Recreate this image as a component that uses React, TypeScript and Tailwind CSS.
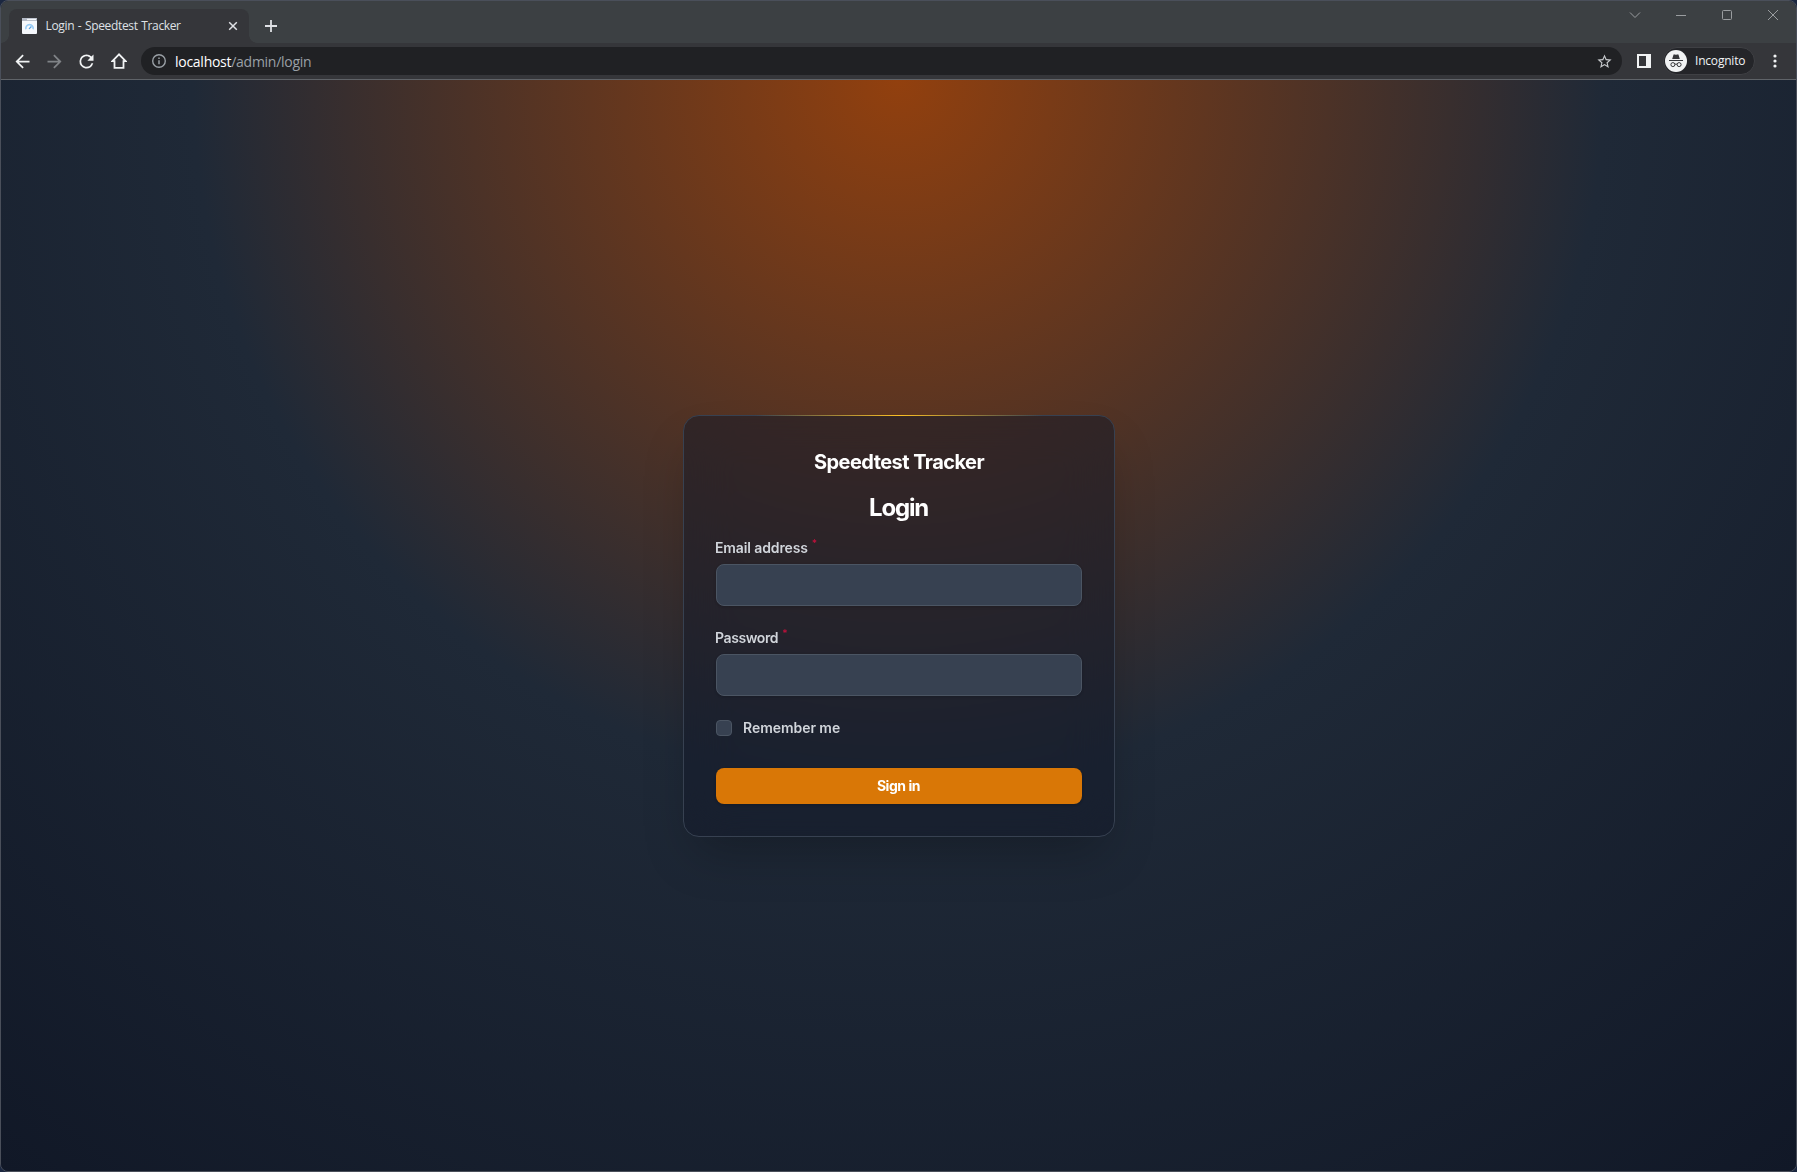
import React from "react";

function Favicon() {
  return (
    <svg width="15" height="16" viewBox="0 0 15 16" className="shrink-0">
      <rect x="0" y="0" width="15" height="16" rx="1" fill="#f5f8fc" />
      <path d="M0 1a1 1 0 0 1 1-1h13a1 1 0 0 1 1 1v2H0z" fill="#b4bac6" />
      <rect x="5" y=".8" width="9" height="1.3" fill="#f5f8fc" />
      <path d="M3.9 11.2a3.7 3.7 0 1 1 7.2 0" fill="none" stroke="#9bcdf5" strokeWidth="1.6" />
      <path d="M7 10.9l2.4-2.4" stroke="#5aa5e6" strokeWidth="1.3" />
    </svg>
  );
}

function BackArrow({ className }: { className: string }) {
  return (
    <svg width="21" height="21" viewBox="0 0 24 24" fill="currentColor" className={className}>
      <path d="M20 11H7.83l5.59-5.59L12 4l-8 8 8 8 1.41-1.41L7.83 13H20v-2z" />
    </svg>
  );
}

function NavButton({ children }: { children: React.ReactNode }) {
  return <div className="flex h-8 w-8 items-center justify-center text-[#f1f3f4]">{children}</div>;
}

function TabStrip() {
  return (
    <div className="flex h-[42px] shrink-0 bg-[#3c4043] pl-2">
      <div className="relative mt-2 flex h-[34px] w-[240px] items-center rounded-t-lg bg-[#35363a] pl-[12.5px]">
        <div className="absolute bottom-0 -left-2 h-2 w-2 bg-[radial-gradient(circle_at_top_left,transparent_7.5px,#35363a_8px)]" />
        <div className="absolute bottom-0 -right-2 h-2 w-2 bg-[radial-gradient(circle_at_top_right,transparent_7.5px,#35363a_8px)]" />
        <Favicon />
        <span className="ml-[9px] w-[175.5px] whitespace-nowrap font-['Open_Sans',sans-serif] text-[12px] leading-4 tracking-[-0.35px] [word-spacing:0.9px] text-[#dfe1e5]">
          Login - Speedtest Tracker
        </span>
        <svg width="16" height="16" viewBox="0 0 16 16" stroke="#dfe1e5" strokeWidth="1.5" className="ml-1">
          <path d="M4.2 4.2l7.6 7.6M11.8 4.2l-7.6 7.6" />
        </svg>
      </div>
      <svg width="16" height="16" viewBox="0 0 16 16" stroke="#dfe1e5" strokeWidth="1.8" className="mt-[17px] ml-[14px]">
        <path d="M8 2v12M2 8h12" />
      </svg>
      <div className="ml-auto flex h-7 text-[#9a9da0]">
        <div className="flex w-[46px] items-center justify-center">
          <svg width="12" height="12" viewBox="0 0 12 12" fill="none" stroke="currentColor"><path d="M1 3.5l5 5 5-5" /></svg>
        </div>
        <div className="flex w-[46px] items-center justify-center">
          <svg width="10" height="12" viewBox="0 0 10 12" fill="none" stroke="currentColor"><path d="M0 6.5h10" /></svg>
        </div>
        <div className="flex w-[46px] items-center justify-center">
          <svg width="10" height="10" viewBox="0 0 10 10" fill="none" stroke="currentColor"><rect x=".5" y=".5" width="9" height="9" rx="1" /></svg>
        </div>
        <div className="flex w-[46px] items-center justify-center">
          <svg width="10" height="10" viewBox="0 0 10 10" fill="none" stroke="currentColor"><path d="M0 0l10 10M10 0L0 10" /></svg>
        </div>
      </div>
    </div>
  );
}

function IncognitoGlyph() {
  return (
    <svg width="22" height="22" viewBox="0 0 22 22" className="shrink-0">
      <circle cx="11" cy="11" r="11" fill="#f1f3f4" />
      <path d="M7.2 9L8.4 4.9q.2-.7 1-.5l1.6.4 1.6-.4q.8-.2 1 .5L14.8 9z" fill="#35363a" />
      <rect x="4" y="10" width="14" height="1" fill="#35363a" />
      <g fill="none" stroke="#35363a" strokeWidth="1">
        <circle cx="7.9" cy="14.6" r="2" />
        <circle cx="14.1" cy="14.6" r="2" />
        <path d="M9.9 14.3q1.1-.6 2.2 0" />
      </g>
    </svg>
  );
}

function Toolbar() {
  return (
    <div className="flex h-[37px] shrink-0 items-center border-b border-[#5f6368] bg-[#35363a] pl-[5.5px] font-['Open_Sans',sans-serif]">
      <NavButton><BackArrow className="" /></NavButton>
      <NavButton><BackArrow className="rotate-180 text-[#808387]" /></NavButton>
      <NavButton>
        <svg width="21" height="21" viewBox="0 0 24 24" fill="currentColor">
          <path d="M17.65 6.35A7.96 7.96 0 0 0 12 4a8 8 0 1 0 7.73 10h-2.08A5.99 5.99 0 0 1 12 18c-3.31 0-6-2.69-6-6s2.69-6 6-6c1.66 0 3.14.69 4.22 1.78L13 11h7V4l-2.35 2.35z" />
        </svg>
      </NavButton>
      <NavButton>
        <svg width="16" height="16" viewBox="0 0 16 16" fill="none" stroke="currentColor" strokeWidth="1.8" className="ml-px">
          <path d="M8 1.3L1.4 8.1h2.1v6.8h9V8.1h2.1z" />
        </svg>
      </NavButton>
      <div className="ml-[6.5px] flex h-7 w-[1481px] items-center rounded-full bg-[#202124] pr-[9.5px] pl-[10px]">
        <svg width="16" height="16" viewBox="0 0 16 16" fill="none" stroke="#9aa0a6" strokeWidth="1.4">
          <circle cx="8" cy="8" r="6.3" />
          <path d="M8 7.2v4M8 4.4v1.5" strokeWidth="1.5" />
        </svg>
        <span className="ml-[8px] whitespace-nowrap pt-px text-[14px] leading-5 tracking-[-0.27px] text-[#9aa0a6]">
          <span className="text-white">localhost</span>/admin/login
        </span>
        <svg width="17" height="17" viewBox="0 0 24 24" fill="#c4c7ca" className="ml-auto">
          <path d="M22 9.24l-7.19-.62L12 2 9.19 8.63 2 9.24l5.46 4.73L5.82 21 12 17.27 18.18 21l-1.63-7.03L22 9.24zM12 15.4l-3.76 2.27 1-4.28-3.32-2.88 4.38-.38L12 6.1l1.71 4.04 4.38.38-3.32 2.88 1 4.28L12 15.4z" />
        </svg>
      </div>
      <svg width="14" height="14" viewBox="0 0 14 14" className="ml-[15px]">
        <path fillRule="evenodd" d="M0 0h14v14H0zM2 2v10h7V2z" fill="#f1f3f4" />
      </svg>
      <div className="ml-3 flex h-7 w-[92px] items-center rounded-full border border-[#3f4044] bg-[#242529] pl-[1px]">
        <IncognitoGlyph />
        <span className="ml-[8px] whitespace-nowrap text-[12px] leading-4 tracking-[-0.2px] text-[#f1f3f4]">Incognito</span>
      </div>
      <svg width="4" height="14" viewBox="0 0 4 14" fill="#f1f3f4" className="ml-[17.5px]">
        <circle cx="2" cy="2" r="1.6" />
        <circle cx="2" cy="7" r="1.6" />
        <circle cx="2" cy="12" r="1.6" />
      </svg>
    </div>
  );
}

function Field({ label, type, labelClass }: { label: string; type: string; labelClass: string }) {
  return (
    <label className="flex flex-col gap-[6px]">
      <span className="-ml-px flex h-5 text-[14px] leading-5 font-semibold text-[#d1d5db]">
        <span className={labelClass}>{label}</span>
        <span className="ml-[4px] -mt-[3px] text-[10px] leading-4 text-[#be123c]">*</span>
      </span>
      <input type={type} className="h-[42px] w-full rounded-lg border border-[#4b5563] bg-[#374151] px-3 shadow-sm" />
    </label>
  );
}

function LoginCard() {
  return (
    <form className="relative flex h-[422px] w-[432px] flex-col rounded-2xl border border-[#374151] bg-[#111827]/50 p-8 font-['Inter',sans-serif] shadow-2xl backdrop-blur-xl">
      <div className="absolute -top-px left-[71px] h-px w-[288px] bg-[linear-gradient(to_right,#374151,#fbbf24,#374151)]" />
      <h1 className="text-center text-[20px] leading-7 font-bold tracking-[-0.55px] text-white">Speedtest Tracker</h1>
      <h2 className="mt-4 -ml-px text-center text-[24px] leading-8 font-bold tracking-[-1.2px] text-white">Login</h2>
      <div className="mt-[14px] flex flex-col gap-[22px]">
        <Field label="Email address" type="email" labelClass="tracking-[-0.12px]" />
        <Field label="Password" type="password" labelClass="tracking-[-0.4px]" />
        <label className="flex h-5 items-center gap-[11px]">
          <span className="h-4 w-4 rounded border border-[#4b5563] bg-[#374151]" />
          <span className="text-[14px] leading-5 font-semibold tracking-[-0.05px] text-[#d1d5db]">Remember me</span>
        </label>
      </div>
      <button type="button" className="mt-[30px] h-9 rounded-lg bg-[#d97706] pr-px text-[14px] leading-5 font-bold tracking-[-0.45px] text-white shadow-sm">
        Sign in
      </button>
    </form>
  );
}

export default function App() {
  return (
    <div className="h-[1172px] w-[1797px] overflow-hidden bg-[#1b2740]">
      <div className="flex h-full w-full flex-col overflow-hidden rounded-lg border border-[#4a4f5a]">
        <TabStrip />
        <Toolbar />
        <main className="flex flex-1 items-start justify-center bg-[radial-gradient(circle_at_top,#92400e,#1f2937,#111827)] pt-[335px] pl-px">
          <LoginCard />
        </main>
      </div>
    </div>
  );
}
